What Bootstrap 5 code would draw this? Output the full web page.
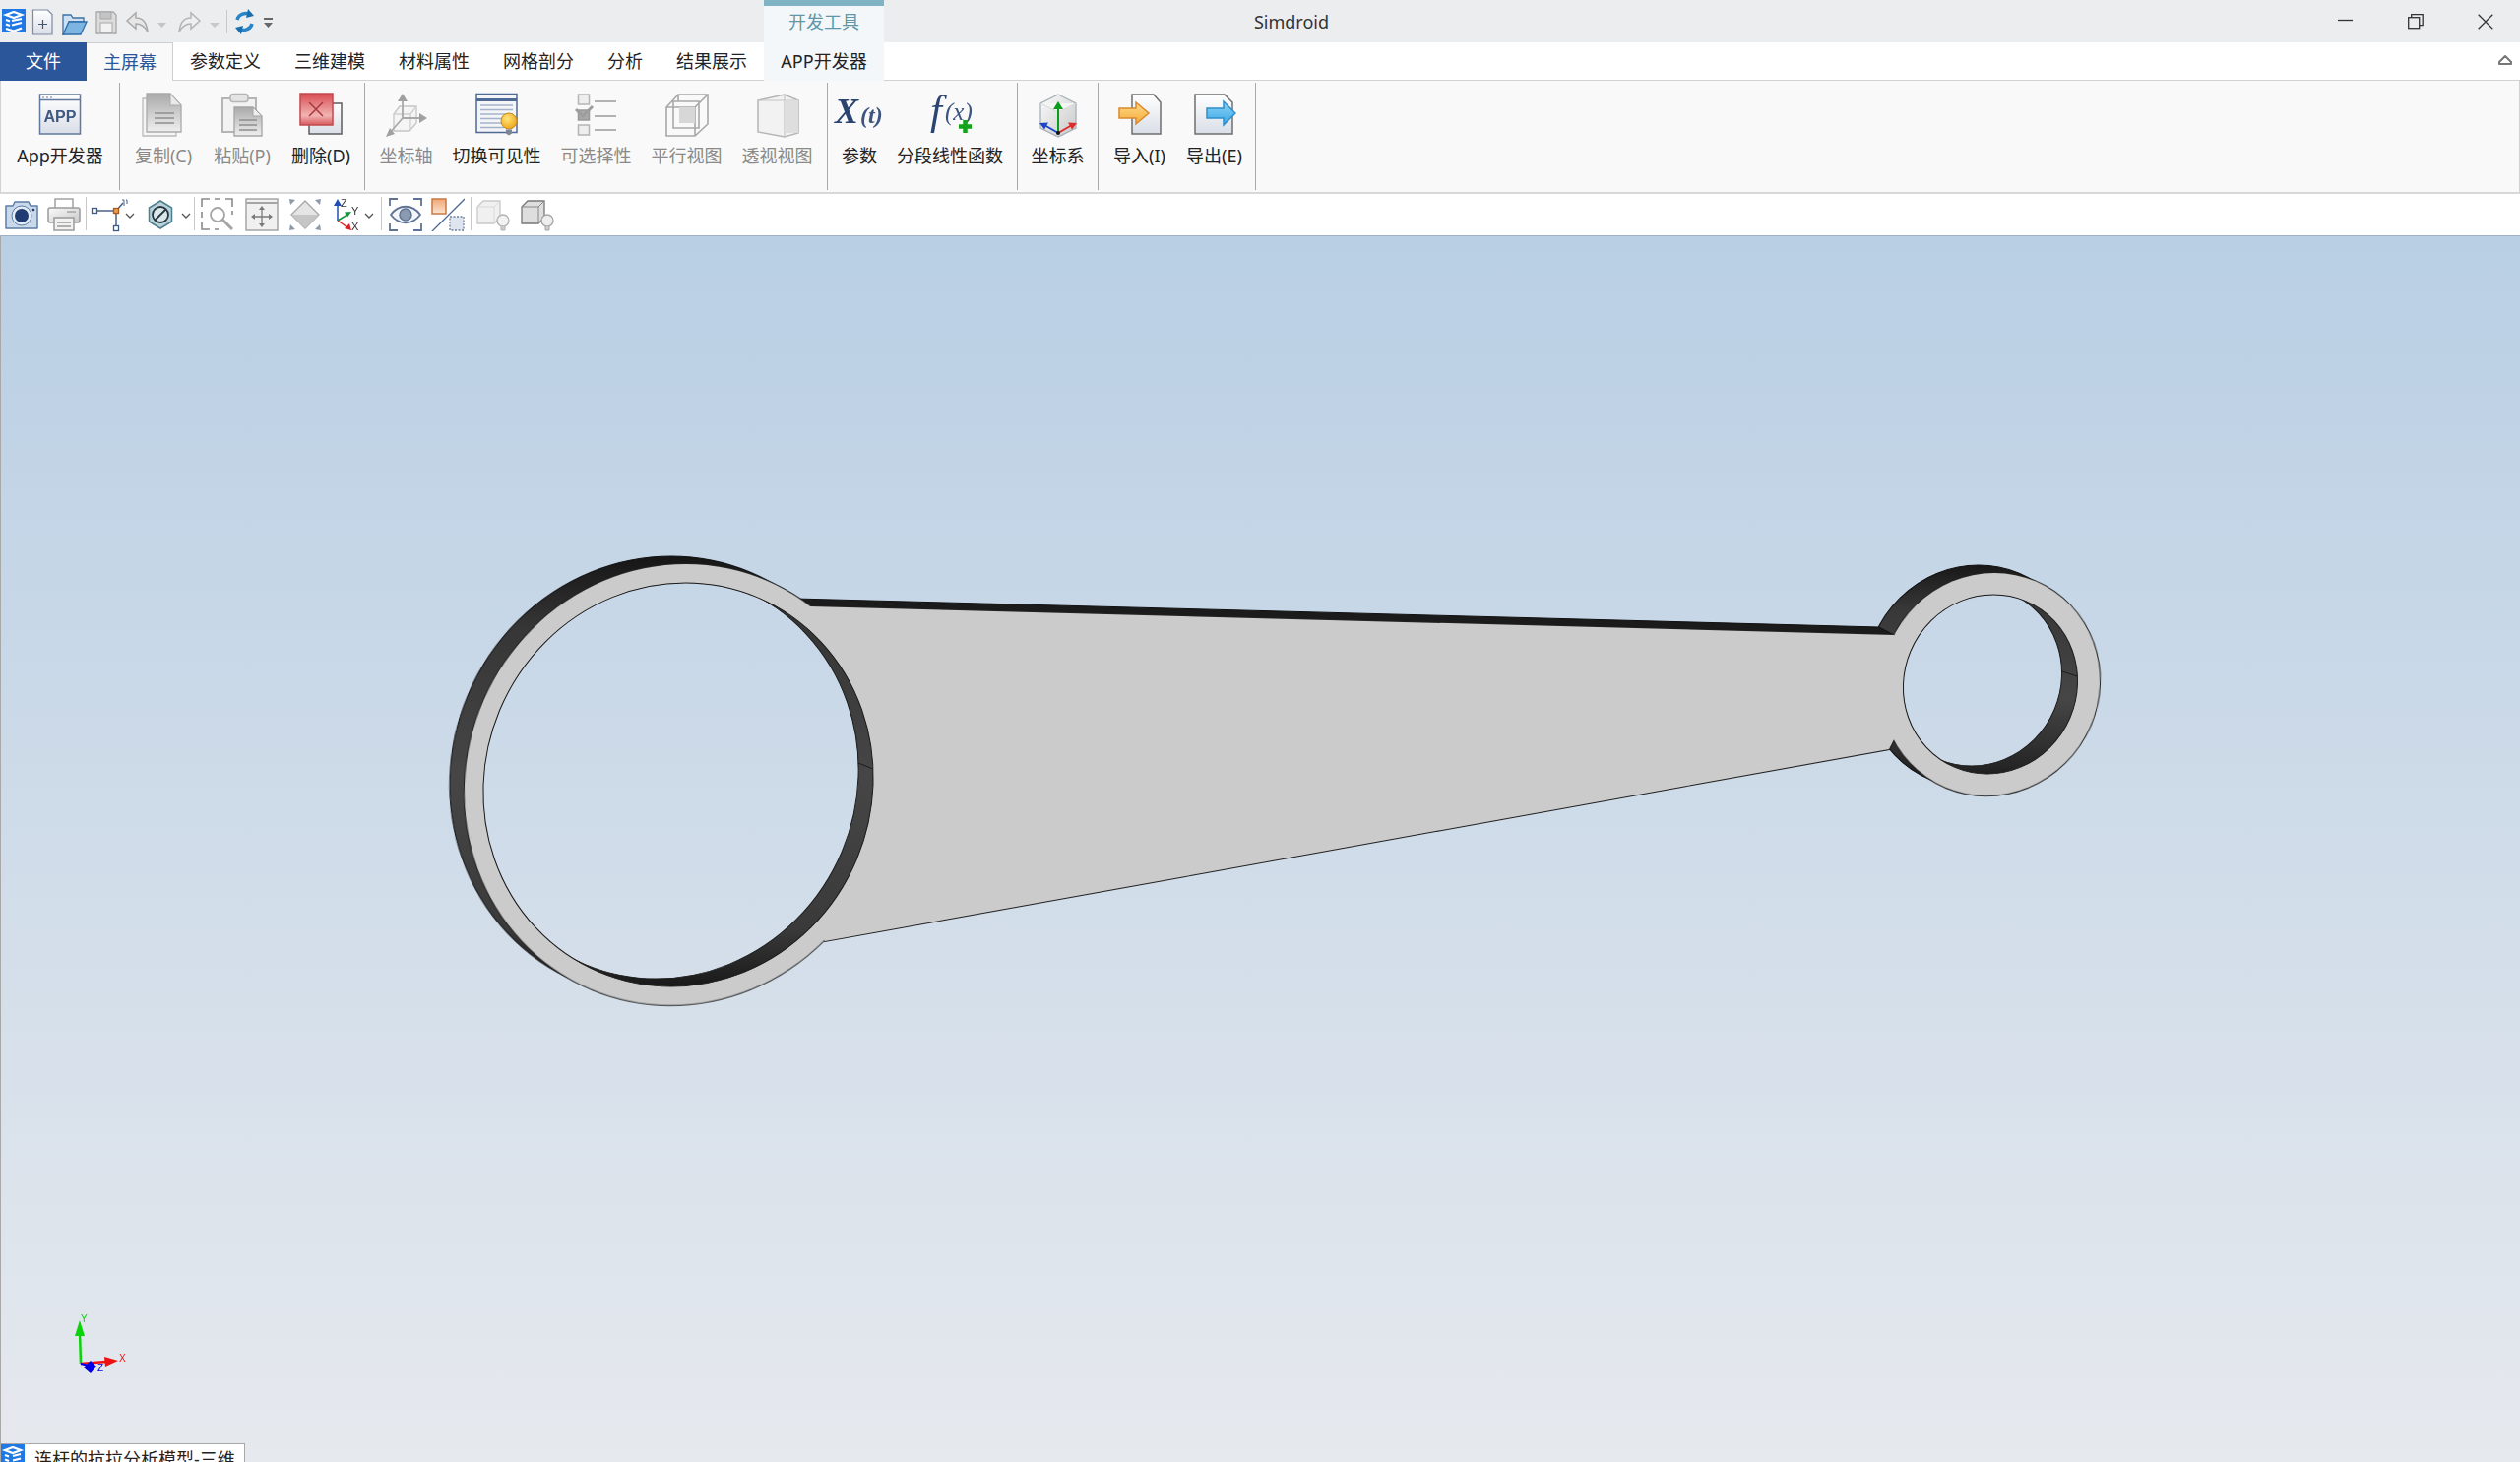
<!DOCTYPE html>
<html lang="zh">
<head>
<meta charset="utf-8">
<title>Simdroid</title>
<link href="https://cdn.jsdelivr.net/npm/bootstrap@5.3.0/dist/css/bootstrap.min.css" rel="stylesheet">
<style>
html,body{height:100%;margin:0;overflow:hidden}
body{font-family:"Noto Sans","Noto Sans CJK SC",sans-serif;font-size:18px;color:#222;background:#fff}
.app-shell{height:1485px;width:2560px;overflow:hidden}
svg{display:block;flex:none}
.soft{filter:blur(.4px)}
.defs-box{position:absolute;width:0;height:0}
.title-bar{height:43px;background:#ecedef}
.qa-zone{width:776px;height:43px}
.ctx-tab{width:122px;height:43px;background:#f3f7fa;border-top:6px solid #80b4c4;color:#5e97a9;font-size:18px;line-height:32px;text-align:center}
.title-text{width:828px;text-align:center;font-size:18px;line-height:44px;color:#333}
.win-btn{width:71px;height:43px}
.tab-row{height:39px;background:#fff;border-bottom:1px solid #d2d2d2}
.rib-tab.nav-link{height:39px;padding:0 17px;line-height:39px;color:#222;font-size:18px;white-space:nowrap;background:transparent}
.rib-tab.file-tab{width:88px;padding:0;text-align:center;background:#2b579a;color:#fff}
.rib-tab.on-tab{background:#f9f9f9;color:#2b579a;border:1px solid #cfcfcf;border-bottom:0;border-left:0;padding:0 16px 0 17px;line-height:38px;height:39px;margin-bottom:-1px}
.rib-tab.dev-tab{background:#f3f7fa;padding:0 16px;width:122px;text-align:center}
.collapse-mark{margin-right:7px;margin-top:10px}
.ribbon{height:115px;background:#f9f9f9;border-bottom:2px solid #d8d8d8;border-left:1px solid #d2d2d2;border-right:1px solid #d2d2d2}
.rib-group{height:109px;margin-top:2px;justify-content:center;border-right:1px solid #a9a9a9}
.rg-app{width:121px}
.rg-edit{width:249px}
.rg-view{width:470px}
.rg-func{width:193px}
.rg-coord{width:82px}
.rg-file{width:160px}
.btn.rib-item{display:flex;flex-direction:column;align-items:center;padding:10px 10px 0;border:0;border-radius:0;font-size:18px;line-height:24px;color:#222;white-space:nowrap;background:transparent}
.btn.rib-item.off{color:#8a8a8a}
.btn.rib-item.even-80{width:80px;padding-left:0;padding-right:0}
.btn.rib-item.even-76{width:76px;padding-left:0;padding-right:0}
.rib-item svg{margin-bottom:6px}
.rib-item svg.wide-ico{margin-left:-10px;margin-right:-10px}
.rib-item svg.tall-ico{margin-top:-10px}
.tool-row{height:43px;background:#fff;border-bottom:1px solid #9fb0c4}
.tool-sep{width:1px;height:34px;background:#c9c9c9;margin:3px 0 0}
.tool-cell{height:42px;display:flex;align-items:center;justify-content:center}
.tc-42{width:42px;padding-right:4px}.tc-43{width:43px}.tc-44{width:44px}.tc-46{width:46px}.tc-48{width:48px}.tc-53{width:53px}.tc-55{width:55px}.tc-56{width:56px}
.stage{position:relative;background:linear-gradient(#b9cfe4,#e6e9ee);box-shadow:inset 1px 0 0 #a8a8a8}
.model{position:absolute;left:0;top:0}
.doc-tab{position:relative;margin-left:1px;width:248px;height:19px;overflow:hidden;background:#fff;border-top:1px solid #a8a8a8;border-right:1px solid #a8a8a8;line-height:30px;font-size:18px;color:#222;white-space:nowrap}
.doc-name{padding-left:10px}
</style>
</head>
<body>
<svg class="defs-box" aria-hidden="true">
<defs>
<linearGradient id="gPage" x1="0" y1="0" x2="0" y2="1"><stop offset="0" stop-color="#fff"/><stop offset="1" stop-color="#d9dee7"/></linearGradient>
<linearGradient id="gGrayDoc" x1="0" y1="0" x2="0" y2="1"><stop offset="0" stop-color="#a9a9a9"/><stop offset="1" stop-color="#efefef"/></linearGradient>
<linearGradient id="gRed" x1="0" y1="0" x2="0" y2="1"><stop offset="0" stop-color="#d84c52"/><stop offset=".7" stop-color="#f3b3b3"/><stop offset="1" stop-color="#d85a5e"/></linearGradient>
<linearGradient id="gCube" x1="0" y1="0" x2="1" y2="1"><stop offset="0" stop-color="#fbfbfb"/><stop offset="1" stop-color="#c8c8c8"/></linearGradient>
<linearGradient id="gOrange" x1="0" y1="0" x2="0" y2="1"><stop offset="0" stop-color="#ffdc8a"/><stop offset="1" stop-color="#f4a93a"/></linearGradient>
<linearGradient id="gBlueArrow" x1="0" y1="0" x2="0" y2="1"><stop offset="0" stop-color="#8fd4f7"/><stop offset="1" stop-color="#38a6e2"/></linearGradient>
<linearGradient id="gOrSq" x1="0" y1="0" x2="0" y2="1"><stop offset="0" stop-color="#f0a777"/><stop offset="1" stop-color="#fbe3cf"/></linearGradient>
<radialGradient id="gBulb" cx=".4" cy=".35" r=".7"><stop offset="0" stop-color="#ffe67a"/><stop offset="1" stop-color="#eda318"/></radialGradient>
<linearGradient id="gWall" gradientUnits="userSpaceOnUse" x1="0" y1="566" x2="0" y2="1010"><stop offset="0" stop-color="#161616"/><stop offset=".16" stop-color="#363636"/><stop offset=".5" stop-color="#464646"/><stop offset=".85" stop-color="#3a3a3a"/><stop offset="1" stop-color="#141414"/></linearGradient>
<linearGradient id="gWallS" gradientUnits="userSpaceOnUse" x1="0" y1="574" x2="0" y2="800"><stop offset="0" stop-color="#181818"/><stop offset=".2" stop-color="#383838"/><stop offset=".6" stop-color="#464646"/><stop offset=".9" stop-color="#262626"/><stop offset="1" stop-color="#141414"/></linearGradient>
</defs>
</svg>

<div class="app-shell d-flex flex-column">

  <!-- title bar -->
  <div class="title-bar d-flex flex-shrink-0">
    <div class="qa-zone position-relative">
      <svg class="soft" width="290" height="43" viewBox="0 0 290 43">
        <rect x="2" y="9" width="24" height="24" fill="#1f78e4"/>
        <path d="M6 15l8-3 8 3-8 3zM6 20l4 1.500M6 24.500l4 1.500M6 29l8 2.500 8-3M12 21l10-2M12 25.500l10-2.500" fill="none" stroke="#fff" stroke-width="2.200"/>
        <path d="M33.500 12h15l4.500 4.500v20.500h-19.500z" fill="url(#gPage)" stroke="#7c8ba3" stroke-width="1.200" transform="translate(0 -2)"/>
        <path d="M43.500 20v9M39 24.500h9" stroke="#44556f" stroke-width="1.200"/>
        <path d="M64 35V15h8l2 3h11v4H70l-5 13z" fill="#cfe0f0" stroke="#3b71a8" stroke-width="1.300"/>
        <path d="M64 35l6-13h18l-6 13z" fill="#7cb5e2" stroke="#2f6ea8" stroke-width="1.300"/>
        <path d="M98 12h17l3 3v19H98z" fill="#dcdcdc" stroke="#a8a8a8" stroke-width="1.300"/>
        <rect x="102" y="12" width="11" height="7" fill="#c4c4c4" stroke="#a8a8a8"/>
        <rect x="102" y="23" width="12" height="10" fill="#f2f2f2" stroke="#a8a8a8"/>
        <path d="M129 21l9-8v5c7 0 11 5 12 14-3-5-6-8-12-8v5z" fill="#e7e7e7" stroke="#aaa" stroke-width="1.500"/>
        <path d="M160 23h9l-4.500 5z" fill="#c4c4c4"/>
        <path d="M203 21l-9-8v5c-7 0-11 5-12 14 3-5 6-8 12-8v5z" fill="#efefef" stroke="#b4b4b4" stroke-width="1.500"/>
        <path d="M213 23h10l-5 5z" fill="#c9c9c9"/>
        <path d="M230.500 10v24" stroke="#c9c9c9"/>
        <path d="M241 20a9 8 0 0 1 14-5" fill="none" stroke="#2784c6" stroke-width="3.500"/>
        <path d="M252 9l6 7-8 2z" fill="#1b6fae"/>
        <path d="M256 24a9 8 0 0 1-14 5" fill="none" stroke="#2784c6" stroke-width="3.500"/>
        <path d="M245 35l-6-7 8-2z" fill="#1b6fae"/>
        <path d="M268 18h9v2h-9zM268 23h9l-4.500 5z" fill="#666"/>
      </svg>
    </div>
    <div class="ctx-tab">开发工具</div>
    <div class="title-text">Simdroid</div>
    <div class="ms-auto d-flex">
      <div class="win-btn d-flex align-items-center justify-content-center"><svg width="16" height="16" viewBox="0 0 16 16"><path d="M0 6.500h15" stroke="#333" stroke-width="1.300"/></svg></div>
      <div class="win-btn d-flex align-items-center justify-content-center"><svg width="16" height="16" viewBox="0 0 16 16"><rect x=".7" y="3.700" width="11" height="11" fill="none" stroke="#333" stroke-width="1.300"/><path d="M3.700 3.500V.7h11.500v11h-3.500" fill="none" stroke="#333" stroke-width="1.300"/></svg></div>
      <div class="win-btn d-flex align-items-center justify-content-center"><svg width="16" height="16" viewBox="0 0 16 16"><path d="M.7.700l14.600 14.600M15.300.7L.7 15.300" stroke="#333" stroke-width="1.300"/></svg></div>
    </div>
  </div>

  <!-- ribbon tabs -->
  <ul class="nav tab-row flex-shrink-0 flex-nowrap">
    <li class="nav-item"><a class="nav-link rib-tab file-tab" href="#">文件</a></li>
    <li class="nav-item"><a class="nav-link rib-tab on-tab" href="#">主屏幕</a></li>
    <li class="nav-item"><a class="nav-link rib-tab" href="#">参数定义</a></li>
    <li class="nav-item"><a class="nav-link rib-tab" href="#">三维建模</a></li>
    <li class="nav-item"><a class="nav-link rib-tab" href="#">材料属性</a></li>
    <li class="nav-item"><a class="nav-link rib-tab" href="#">网格剖分</a></li>
    <li class="nav-item"><a class="nav-link rib-tab" href="#">分析</a></li>
    <li class="nav-item"><a class="nav-link rib-tab" href="#">结果展示</a></li>
    <li class="nav-item"><a class="nav-link rib-tab dev-tab" href="#">APP开发器</a></li>
    <li class="nav-item ms-auto collapse-mark"><svg width="16" height="14" viewBox="0 0 16 14"><path d="M2 10l6-6 6 6v2H2z" fill="#fff" stroke="#777" stroke-width="2" stroke-linejoin="round"/></svg></li>
  </ul>

  <!-- ribbon body -->
  <div class="ribbon d-flex flex-shrink-0">
    <div class="rib-group rg-app d-flex">
      <button class="btn rib-item" type="button">
        <svg class="soft" width="44" height="46" viewBox="0 0 44 46"><rect x="1.500" y="2" width="41" height="40" fill="url(#gPage)" stroke="#62789c" stroke-width="1.500"/><path d="M2 7.500h40" stroke="#62789c" stroke-width="1.500"/><path d="M4 5h2M8 5h2M12 5h2" stroke="#62789c"/><text x="22" y="30" text-anchor="middle" font-family="Liberation Sans,sans-serif" font-weight="700" font-size="16" fill="#3f5a80">APP</text></svg>
        App开发器
      </button>
    </div>
    <div class="rib-group rg-edit d-flex">
      <button class="btn rib-item off even-80" type="button">
        <svg class="soft" width="44" height="46" viewBox="0 0 44 46"><path d="M1 6h12v32h22v6H1z" fill="#f4f4f4" stroke="#bbb" stroke-width="1.300"/><path d="M5 1h24l11 12v27H5z" fill="url(#gGrayDoc)" stroke="#aaa" stroke-width="1.300"/><path d="M29 1v12h11z" fill="#e9e9e9" stroke="#aaa"/><path d="M13 21h20M13 26h20M13 31h20" stroke="#8f8f8f" stroke-width="1.500"/></svg>
        复制(C)
      </button>
      <button class="btn rib-item off even-80" type="button">
        <svg class="soft" width="44" height="46" viewBox="0 0 44 46"><path d="M2 6h34v34H2z" fill="#f2f2f2" stroke="#b5b5b5" stroke-width="2"/><rect x="10" y="1.500" width="18" height="8" rx="3" fill="#e4e4e4" stroke="#b5b5b5" stroke-width="1.500"/><path d="M14 15h19l9 9v20H14z" fill="url(#gGrayDoc)" stroke="#a5a5a5" stroke-width="1.300"/><path d="M33 15v9h9z" fill="#eee" stroke="#a5a5a5"/><path d="M19 28h18M19 33h18M19 38h18" stroke="#8f8f8f" stroke-width="1.500"/></svg>
        粘贴(P)
      </button>
      <button class="btn rib-item even-80" type="button">
        <svg class="soft" width="44" height="46" viewBox="0 0 44 46"><rect x="10" y="11" width="33" height="31" fill="url(#gPage)" stroke="#5e5e5e" stroke-width="1.500"/><rect x="1" y="1" width="33" height="32" fill="url(#gRed)" stroke="#c04b4f" stroke-width="1.500"/><path d="M10 10l14 14M24 10L10 24" stroke="#a63a3e" stroke-width="1.500"/></svg>
        删除(D)
      </button>
    </div>
    <div class="rib-group rg-view d-flex">
      <button class="btn rib-item off" type="button">
        <svg class="soft" width="44" height="46" viewBox="0 0 44 46"><path d="M9 22l6-8h17v17l-7 8H9z" fill="#f3f3f3" fill-opacity=".7" stroke="#c5c5c5" stroke-width="1.300"/><path d="M9 22h17v17M26 22l6-8" fill="none" stroke="#cfcfcf" stroke-width="1.300"/><path d="M18 26V6M18 26h20M18 26L4 42" stroke="#a9a9a9" stroke-width="1.800"/><path d="M18 1l-5 8h10zM43 26l-8-5v10zM1 45l4-9 5 6z" fill="#a0a0a0"/></svg>
        坐标轴
      </button>
      <button class="btn rib-item" type="button">
        <svg class="soft" width="44" height="46" viewBox="0 0 44 46"><rect x="1" y="1.500" width="41" height="39" fill="#f3f5f9" stroke="#4f6a94" stroke-width="1.500"/><path d="M1 7.500h41" stroke="#4f6a94" stroke-width="3"/><path d="M5 13h33M5 17.500h33M5 22h33M5 26.500h26M5 31h24M5 35.500h24" stroke="#a5b3c8" stroke-width="1.300"/><circle cx="34" cy="29" r="8" fill="url(#gBulb)" stroke="#c98a1c"/><path d="M31 37.500h6v4l-3 2-3-2z" fill="#7d8793"/></svg>
        切换可见性
      </button>
      <button class="btn rib-item off" type="button">
        <svg class="soft" width="44" height="46" viewBox="0 0 44 46"><rect x="3.500" y="2" width="11" height="10" fill="#eee" stroke="#b5b5b5" stroke-width="1.500"/><path d="M20 9h22M20 24h22M20 38h22" stroke="#b2b2b2" stroke-width="1.800"/><rect x="3.500" y="18" width="11" height="10" fill="#a8a8a8" stroke="#999" stroke-width="1.500"/><path d="M1 17l7 7 10-10" fill="none" stroke="#9d9d9d" stroke-width="3"/><rect x="3.500" y="33" width="11" height="10" fill="#eee" stroke="#b5b5b5" stroke-width="1.500"/></svg>
        可选择性
      </button>
      <button class="btn rib-item off" type="button">
        <svg class="soft" width="44" height="46" viewBox="0 0 44 46"><path d="M1 15L13 2h30v30L30 44H1zM1 15h29v29M30 15L43 2M8 36h26V9H8zM13 2v7" fill="none" stroke="#a8a8a8" stroke-width="1.600"/><rect x="14" y="15" width="16" height="16" fill="#d7d7d7"/></svg>
        平行视图
      </button>
      <button class="btn rib-item off" type="button">
        <svg class="soft" width="44" height="46" viewBox="0 0 44 46"><path d="M2 8l27-6 14 6v33l-14 4-27-5z" fill="#f2f2f2" stroke="#b5b5b5" stroke-width="1.500"/><path d="M29 2v43M2 8h41" fill="none" stroke="#c4c4c4" stroke-width="1.200"/><path d="M29 8h14v33H29z" fill="#dedede"/></svg>
        透视视图
      </button>
    </div>
    <div class="rib-group rg-func d-flex">
      <button class="btn rib-item" type="button">
        <svg class="soft wide-ico" width="56" height="46" viewBox="0 0 56 46"><text x="3" y="31" font-family="Liberation Serif,serif" font-style="italic" font-weight="700" font-size="36" fill="#2c4470">X</text><text x="29" y="31" font-family="Liberation Serif,serif" font-style="italic" font-weight="700" font-size="24" fill="#3d5580">(t)</text></svg>
        参数
      </button>
      <button class="btn rib-item" type="button">
        <svg class="soft tall-ico" width="60" height="56" viewBox="-4 -10 60 56"><text x="6" y="32" font-family="Liberation Serif,serif" font-style="italic" font-size="43" fill="#2c4470">f</text><text x="21" y="28" font-family="Liberation Serif,serif" font-style="italic" font-size="25" fill="#3d5580">(x)</text><path d="M41.500 28v13M35 34.500h13" stroke="#12a31a" stroke-width="4.500"/></svg>
        分段线性函数
      </button>
    </div>
    <div class="rib-group rg-coord d-flex">
      <button class="btn rib-item" type="button">
        <svg class="soft" width="44" height="46" viewBox="0 0 44 46"><path d="M22 2l18 9v25l-18 9-18-9V11z" fill="url(#gCube)" stroke="#a7b1b8" stroke-width="1.300"/><path d="M4 11l18 9 18-9" fill="#f5f5f5" stroke="#d7d7d7"/><path d="M22 41V14" stroke="#0b9d1a" stroke-width="2"/><path d="M22 9l-5 8h10z" fill="#0b9d1a"/><path d="M22 41l14-8" stroke="#dd2b2b" stroke-width="2"/><path d="M41 31l-9-.5 4 7z" fill="#dd2b2b"/><path d="M22 41L8 33" stroke="#1c46c8" stroke-width="2"/><path d="M3 31l9-.5-4 7z" fill="#1c46c8"/><circle cx="22" cy="41" r="2" fill="#111"/></svg>
        坐标系
      </button>
    </div>
    <div class="rib-group rg-file d-flex">
      <button class="btn rib-item even-76" type="button">
        <svg class="soft" width="44" height="46" viewBox="0 0 44 46"><path d="M14 2h22l7 8v32H14z" fill="url(#gPage)" stroke="#6f6f6f" stroke-width="1.500"/><path d="M1 16h17v-6l13 11-13 11v-6H1z" fill="url(#gOrange)" stroke="#d98a2b" stroke-width="1.500"/></svg>
        导入(I)
      </button>
      <button class="btn rib-item even-76" type="button">
        <svg class="soft" width="44" height="46" viewBox="0 0 44 46"><path d="M2 2h30l8 8v32H2z" fill="url(#gPage)" stroke="#6f6f6f" stroke-width="1.500"/><path d="M14 16h17v-7l12 12-12 12v-7H14z" fill="url(#gBlueArrow)" stroke="#2e8fcb" stroke-width="1.500"/></svg>
        导出(E)
      </button>
    </div>
  </div>

  <!-- view toolbar -->
  <div class="tool-row d-flex flex-shrink-0">
    <div class="tool-cell tc-43"><svg class="soft" width="36" height="32" viewBox="0 0 36 32"><path d="M2 7h7l2-4h14l2 4h7v23H2z" fill="#c9d8ea" stroke="#5c7ea6" stroke-width="1.500" stroke-linejoin="round"/><circle cx="18" cy="17" r="10" fill="#e4edf6" stroke="#5c7ea6"/><circle cx="18" cy="17" r="7" fill="#1f3d72"/><circle cx="30" cy="11" r="1.300" fill="#1f3d72"/></svg></div>
    <div class="tool-cell tc-44"><svg class="soft" width="34" height="34" viewBox="0 0 34 34"><rect x="8" y="1" width="18" height="10" fill="#fff" stroke="#a2a2a2" stroke-width="1.500"/><rect x="1" y="10" width="32" height="15" rx="2" fill="url(#gCube)" stroke="#9b9b9b" stroke-width="1.500"/><path d="M20 14h9" stroke="#888"/><rect x="7" y="20" width="20" height="13" fill="#f1f1f1" stroke="#9b9b9b" stroke-width="1.500"/><path d="M10 25h14M10 29h14" stroke="#999" stroke-width="1.300"/></svg></div>
    <div class="tool-sep"></div>
    <div class="tool-cell tc-53"><svg class="soft" width="53" height="36" viewBox="0 0 53 36"><path d="M8 14h22V32M30 14l7-8" fill="none" stroke="#4a6284" stroke-width="1.500"/><rect x="5.500" y="11.500" width="5" height="5" fill="#fff" stroke="#3e5b85" stroke-width="1.300"/><rect x="27.500" y="11.500" width="5" height="5" fill="#f29a4b" stroke="#a55a1c" stroke-width="1.300"/><rect x="27.500" y="29.500" width="5" height="5" fill="#fff" stroke="#3e5b85" stroke-width="1.300"/><path d="M36 3h2v6M40 3h1v4" stroke="#4a6284" fill="none"/><path d="M40 17l4 4 4-4" fill="none" stroke="#555" stroke-width="1.300"/></svg></div>
    <div class="tool-cell tc-56"><svg class="soft" width="56" height="36" viewBox="0 0 56 36"><path d="M22 4l11.500 7v14L22 32l-11.500-7V11z" fill="#b9d3da" stroke="#4f7f8f" stroke-width="1.500"/><circle cx="22" cy="18" r="8" fill="#d9e6ea" stroke="#27353f" stroke-width="1.800"/><path d="M16.500 23.500L27.500 12.500" stroke="#27353f" stroke-width="1.800"/><path d="M44 17l4 4 4-4" fill="none" stroke="#555" stroke-width="1.300"/></svg></div>
    <div class="tool-sep"></div>
    <div class="tool-cell tc-46"><svg class="soft" width="34" height="34" viewBox="0 0 34 34"><path d="M1 9V1h8M14 1h6M25 1h7v8M32 13v4M1 14v6M1 25v7h8M14 32h4" fill="none" stroke="#8a8a8a" stroke-width="1.600"/><circle cx="17" cy="17" r="7" fill="#fff" stroke="#a5a5a5" stroke-width="1.800"/><path d="M22 22l10 10" stroke="#a5a5a5" stroke-width="3"/></svg></div>
    <div class="tool-cell tc-44"><svg class="soft" width="34" height="34" viewBox="0 0 34 34"><rect x="1" y="1" width="32" height="32" fill="#f0f0f0" stroke="#a5a5a5" stroke-width="1.500"/><path d="M1 5h32" stroke="#a5a5a5" stroke-width="2"/><path d="M17 10v18M8 19h18" stroke="#7a7a7a" stroke-width="1.300"/><path d="M17 8l-3 4h6zM17 30l-3-4h6zM6 19l4-3v6zM28 19l-4-3v6z" fill="#7a7a7a"/></svg></div>
    <div class="tool-cell tc-44"><svg class="soft" width="34" height="34" viewBox="0 0 34 34"><path d="M17 3l14 14-14 14L3 17z" fill="#e5e5e5" stroke="#a5a5a5" stroke-width="1.300"/><path d="M3 17h28L17 31z" fill="#c6c6c6"/><path d="M1 1l6 1-5 5zM33 1l-6 1 5 5zM1 33l6-1-5-5zM33 33l-6-1 5-5z" fill="#8f9aa8"/></svg></div>
    <div class="tool-cell tc-55"><svg class="soft" width="55" height="36" viewBox="0 0 55 36"><path d="M11 24V8" stroke="#1f4fb3" stroke-width="1.500"/><path d="M11 2l-4 7h8z" fill="#1f4fb3"/><path d="M11 24l10-6" stroke="#12963a" stroke-width="1.500"/><path d="M25 15l-7 .5 3 5z" fill="#12963a"/><path d="M11 24l10 7" stroke="#e02020" stroke-width="1.500"/><path d="M25 34l-2-7-5 5z" fill="#e02020"/><text x="14" y="10" font-family="Liberation Sans,sans-serif" font-size="11" fill="#333">Z</text><text x="25" y="18" font-family="Liberation Sans,sans-serif" font-size="11" fill="#333">Y</text><text x="25" y="34" font-family="Liberation Sans,sans-serif" font-size="11" fill="#333">X</text><path d="M39 17l4 4 4-4" fill="none" stroke="#555" stroke-width="1.300"/></svg></div>
    <div class="tool-sep"></div>
    <div class="tool-cell tc-48"><svg class="soft" width="34" height="34" viewBox="0 0 34 34"><path d="M1 8V1h8M25 1h8v7M1 26v7h8M25 33h8v-7" fill="none" stroke="#5e7396" stroke-width="1.800"/><path d="M2 17c8-11 22-11 30 0-8 11-22 11-30 0z" fill="#f3f5f9" stroke="#5e7396" stroke-width="1.800"/><circle cx="17" cy="17" r="6" fill="#8a9ab1" stroke="#5e7396" stroke-width="1.500"/></svg></div>
    <div class="tool-cell tc-42"><svg class="soft" width="34" height="34" viewBox="0 0 34 34"><rect x="1" y="1" width="14" height="15" fill="url(#gOrSq)" stroke="#c67a45" stroke-width="1.500"/><path d="M1 34L34 1" stroke="#4e6793" stroke-width="1.300"/><rect x="19" y="19" width="14" height="14" fill="#dfe5ef" stroke="#6d7f9e" stroke-width="1.300" stroke-dasharray="2 1.500"/></svg></div>
    <div class="tool-sep"></div>
    <div class="tool-cell tc-46"><svg class="soft" width="36" height="34" viewBox="0 0 36 34"><path d="M1 9l6-6h17v17l-6 6H1z" fill="#f0f0f0" stroke="#c9c9c9" stroke-width="1.300"/><path d="M1 9h17v17M18 9l6-6" fill="none" stroke="#d9d9d9"/><circle cx="27" cy="23" r="6" fill="#f2f2f2" stroke="#b2b2b2" stroke-width="1.300"/><path d="M25 29v4h4v-4" fill="#ccc" stroke="#b2b2b2"/></svg></div>
    <div class="tool-cell tc-44"><svg class="soft" width="36" height="34" viewBox="0 0 36 34"><path d="M1 9l6-6h17v17l-6 6H1z" fill="#dedede" stroke="#777" stroke-width="1.300"/><path d="M1 9h17v17M18 9l6-6" fill="none" stroke="#888"/><circle cx="27" cy="23" r="6" fill="#eee" stroke="#a5a5a5" stroke-width="1.300"/><path d="M25 29v4h4v-4" fill="#ccc" stroke="#a5a5a5"/></svg></div>
  </div>

  <!-- 3D view -->
  <div class="stage flex-grow-1 d-flex flex-column justify-content-end">
    <svg class="model" width="2560" height="1245" viewBox="0 240 2560 1245">
      <defs>
        <clipPath id="cFrontBig"><ellipse cx="689" cy="797" rx="198" ry="205" transform="translate(689 797) skewX(-2) translate(-689 -797)"/></clipPath>
        <clipPath id="cFrontSmall"><ellipse cx="2022" cy="695" rx="88.500" ry="91" transform="translate(2022 695) skewX(-2) translate(-2022 -695)"/></clipPath>
        <clipPath id="cBackBig"><ellipse cx="674" cy="789" rx="198" ry="205" transform="translate(674 789) skewX(-2) translate(-674 -789)"/></clipPath>
        <clipPath id="cBackSmall"><ellipse cx="2006" cy="687" rx="88.500" ry="91" transform="translate(2006 687) skewX(-2) translate(-2006 -687)"/></clipPath>
        <mask id="mThrough" maskUnits="userSpaceOnUse" x="0" y="240" width="2560" height="1245">
          <rect x="0" y="240" width="2560" height="1245" fill="#fff"/>
          <g clip-path="url(#cBackBig)"><ellipse cx="689" cy="797" rx="198" ry="205" transform="translate(689 797) skewX(-2) translate(-689 -797)" fill="#000"/></g>
          <g clip-path="url(#cBackSmall)"><ellipse cx="2022" cy="695" rx="88.500" ry="91" transform="translate(2022 695) skewX(-2) translate(-2022 -695)" fill="#000"/></g>
        </mask>
        <mask id="mFront" maskUnits="userSpaceOnUse" x="0" y="240" width="2560" height="1245">
          <rect x="0" y="240" width="2560" height="1245" fill="#fff"/>
          <ellipse cx="689" cy="797" rx="198" ry="205" transform="translate(689 797) skewX(-2) translate(-689 -797)" fill="#000"/>
          <ellipse cx="2022" cy="695" rx="88.500" ry="91" transform="translate(2022 695) skewX(-2) translate(-2022 -695)" fill="#000"/>
        </mask>
      </defs>
      <g mask="url(#mThrough)">
        <ellipse cx="674" cy="789" rx="217" ry="224" transform="translate(674 789) skewX(-2) translate(-674 -789)" fill="url(#gWall)" stroke="#111"/>
        <ellipse cx="2006" cy="687" rx="111" ry="113" transform="translate(2006 687) skewX(-2) translate(-2006 -687)" fill="url(#gWallS)" stroke="#111"/>
        <path d="M808 608L1909 637L1924 645L823 616z" fill="#1b1b1b" stroke="#111"/>
        <ellipse cx="689" cy="797" rx="198" ry="205" transform="translate(689 797) skewX(-2) translate(-689 -797)" fill="url(#gWall)"/>
        <ellipse cx="2022" cy="695" rx="88.500" ry="91" transform="translate(2022 695) skewX(-2) translate(-2022 -695)" fill="url(#gWallS)"/>
      </g>
      <g mask="url(#mFront)">
        <g fill="#222" stroke="#222" stroke-width="2">
          <ellipse cx="689" cy="797" rx="217" ry="224" transform="translate(689 797) skewX(-2) translate(-689 -797)"/>
          <ellipse cx="2022" cy="695" rx="111" ry="113" transform="translate(2022 695) skewX(-2) translate(-2022 -695)"/>
          <path d="M823 616L1924 645L1950 700L1919 761L838 956L700 800z"/>
        </g>
        <g fill="#cbcbcb">
          <ellipse cx="689" cy="797" rx="217" ry="224" transform="translate(689 797) skewX(-2) translate(-689 -797)"/>
          <ellipse cx="2022" cy="695" rx="111" ry="113" transform="translate(2022 695) skewX(-2) translate(-2022 -695)"/>
          <path d="M823 616L1924 645L1950 700L1919 761L838 956L700 800z"/>
        </g>
      </g>
      <g fill="none" stroke="#1c1c1c" stroke-width="1">
        <ellipse cx="689" cy="797" rx="198" ry="205" transform="translate(689 797) skewX(-2) translate(-689 -797)"/>
        <ellipse cx="2022" cy="695" rx="88.500" ry="91" transform="translate(2022 695) skewX(-2) translate(-2022 -695)"/>
        <g clip-path="url(#cFrontBig)"><ellipse cx="674" cy="789" rx="198" ry="205" transform="translate(674 789) skewX(-2) translate(-674 -789)"/></g>
        <g clip-path="url(#cFrontSmall)"><ellipse cx="2006" cy="687" rx="88.500" ry="91" transform="translate(2006 687) skewX(-2) translate(-2006 -687)"/></g>
        <path d="M872 775l15 6M2095 682l15 5"/>
      </g>
      <!-- axis triad -->
      <path d="M82 1385L81 1354" stroke="#0ad30a" stroke-width="2.500"/>
      <path d="M81 1341l-5 16h10z" fill="#0ad30a"/>
      <path d="M82 1385L108 1383" stroke="#f01010" stroke-width="2.500"/>
      <path d="M120 1382l-14-4 1 10z" fill="#f01010"/>
      <path d="M82 1385L90 1387" stroke="#0000e8" stroke-width="2"/>
      <path d="M92 1382l6 6-6 7-7-6z" fill="#0000e8"/>
      <text x="82" y="1343" font-family="Liberation Sans,sans-serif" font-size="10" fill="#0ad30a">Y</text>
      <text x="121" y="1383" font-family="Liberation Sans,sans-serif" font-size="10" fill="#f01010">X</text>
      <text x="99" y="1393" font-family="Liberation Sans,sans-serif" font-size="10" fill="#0000e8">Z</text>
    </svg>
    <div class="doc-tab d-flex">
      <svg class="soft" width="24" height="24" viewBox="0 0 24 24"><rect width="24" height="24" fill="#1f78e4"/><path d="M4 6l8-3 8 3-8 3zM4 11l4 1.500M4 15.500l4 1.500M12 12l8-2M12 16.500l8-2" fill="none" stroke="#fff" stroke-width="2.200"/></svg>
      <span class="doc-name">连杆的抗拉分析模型-三维</span>
    </div>
  </div>
</div>
</body>
</html>
